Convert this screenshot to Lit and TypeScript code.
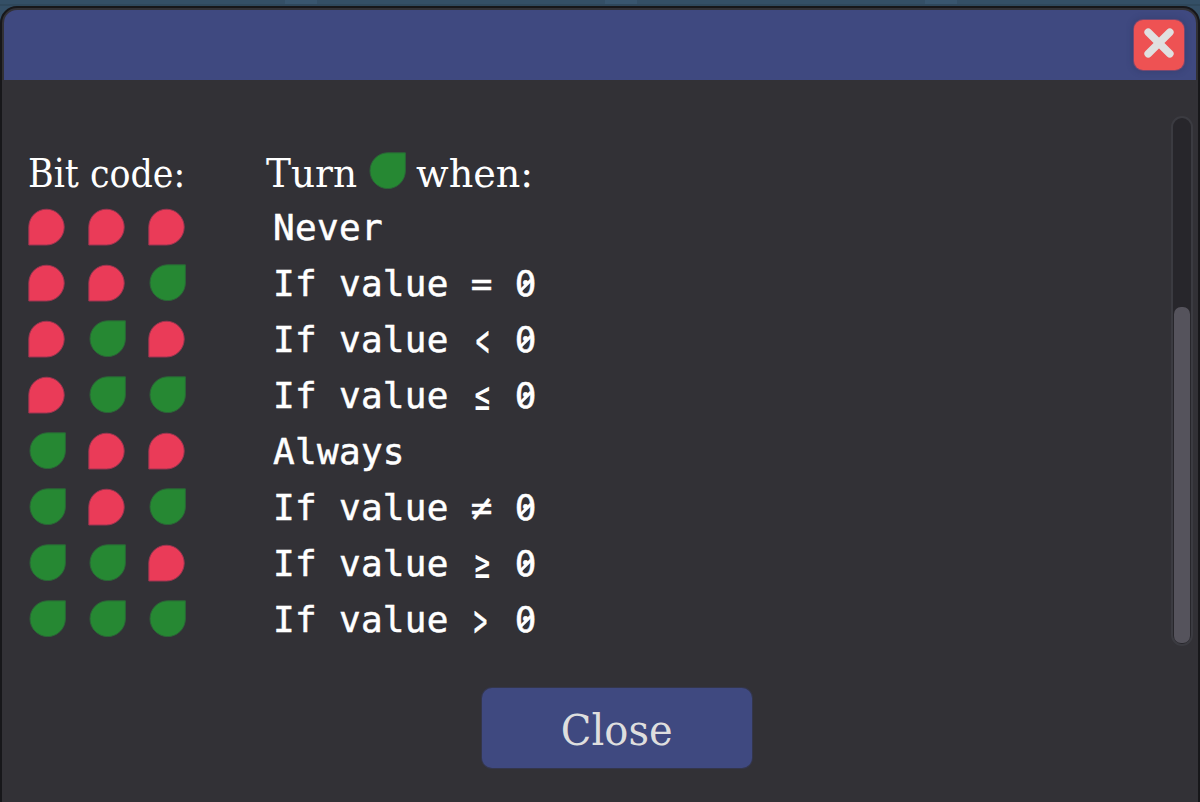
import { LitElement, html, css, svg } from "lit";
import { customElement, property } from "lit/decorators.js";

@customElement("bit-leaf")
class BitLeaf extends LitElement {
  static styles = css`
    :host { display: block; width: 38px; height: 38px; }
    svg { display: block; }
    .off { fill: #ea3b58; stroke: #9c3550; }
    .on { fill: #268833; stroke: #2b6537; }
  `;
  @property({ type: Boolean }) on = false;
  render() {
    return html`<svg width="38" height="38" viewBox="0 0 38 38">
      ${this.on
        ? svg`<path class="on" d="M19.500 0.800H37.400V19A17.700 17.900 0 1 1 19.500 0.800Z"/>`
        : svg`<path class="off" d="M0.800 37V18.500A17.700 17.900 0 1 1 18.500 37Z"/>`}
    </svg>`;
  }
}

@customElement("app-root")
class AppRoot extends LitElement {
  static styles = css`
    :host { display: block; width: 1200px; height: 802px; overflow: hidden; background: linear-gradient(#0000 4px, #2f485c 4px, #2f485c 6px, #0000 6px) 0 0 / 100% 802px no-repeat, repeating-linear-gradient(90deg, #344f66 0 285px, #39566f 285px 317px, #344f66 317px 320px); }
    * { box-sizing: border-box; }
    .page { height: 802px; padding-top: 6px; }
    .window { height: 830px; border: 2px solid #17171a; border-radius: 17px; background: #323136; padding: 2px; }
    .bar { height: 70px; background: #3f4980; border-radius: 13px 13px 0 0; display: flex; justify-content: flex-end; padding: 10px 12px 0 0; }
    .x { width: 50px; height: 50px; border: 0; padding: 0; border-radius: 9px; background: #ee5253; box-shadow: 0 0 0 1px #79486f, 0 0 5px 3px rgba(45, 50, 90, .25); }
    .x svg { display: block; }
    .body { display: flex; justify-content: space-between; height: 566px; padding: 36px 3px 0 24px; }
    .content { padding-top: 27px; }
    .row { display: grid; grid-template-columns: 245px auto; height: 56px; align-items: start; }
    .head { height: 65px; }
    .bits { display: flex; gap: 22px; }
    .slab { font: 40px/60px "DejaVu Serif Condensed", "DejaVu Serif", serif; color: #fff; white-space: nowrap; display: block; transform-origin: 0 50%; }
    .bitcode { width: 158px; transform: scaleX(.97); }
    .turn { display: flex; margin-left: -8px; }
    .t1 { width: 103px; transform: translateX(1px) scaleX(1.04); }
    .t2 { transform: translateX(1px) scaleX(1.06); }
    .turn bit-leaf { margin: 9px 9px 0 0; }
    .mono { font: 36px/42px "DejaVu Sans Mono", monospace; letter-spacing: .3px; color: #fff; white-space: pre; margin-top: -1px; -webkit-text-stroke: .5px #fff; }
    .op { display: inline-block; width: 22px; }
    .lt { transform: translate(.5px, 1px) scale(.62, 1.25); }
    .gt { transform: translate(-1.500px, 1px) scale(.62, 1.25); }
    .le { transform: translate(.5px, -1px) scale(.72, 1.22); -webkit-text-stroke: 0; }
    .zero { position: relative; display: inline-block; width: 22px; }
    .zero::after { content: ""; position: absolute; left: 3.500px; top: 21px; width: 15px; height: 2.500px; background: #fff; transform: rotate(-45deg); }
    .track { width: 22px; height: 530px; border: 2px solid #3b3b41; border-radius: 11px; background: #27262b; padding: 189px 1px 1px; }
    .thumb { height: 336px; border-radius: 7px; background: #55535c; }
    .foot { display: flex; justify-content: center; padding: 42px 0 0 34px; }
    .close { width: 270px; height: 80px; border: 0; padding: 0; border-radius: 10px; background: #3f4980; box-shadow: 0 0 0 1px #34364b; display: flex; justify-content: center; align-items: center; }
    .label { font-size: 42px; color: #dedede; transform: scaleX(1.06); transform-origin: 50% 50%; padding-top: 6px; }
  `;

  private rows = [
    { code: "000", text: "Never" },
    { code: "001", text: "If value ", op: "=" },
    { code: "010", text: "If value ", op: "<", shape: "lt" },
    { code: "011", text: "If value ", op: "≤", shape: "le" },
    { code: "100", text: "Always" },
    { code: "101", text: "If value ", op: "≠" },
    { code: "110", text: "If value ", op: "≥", shape: "le" },
    { code: "111", text: "If value ", op: ">", shape: "gt" },
  ];

  render() {
    return html`<div class="page"><div class="window">
      <div class="bar"><button class="x" aria-label="Close">
        <svg width="50" height="50" viewBox="0 0 50 50"><path d="M14.200 12.200L35.800 33.800M35.800 12.200L14.200 33.800" stroke="#e0e0e0" stroke-width="7.600" stroke-linecap="round"/></svg>
      </button></div>
      <div class="body">
        <div class="content">
          <div class="row head">
            <span class="slab bitcode">Bit code:</span>
            <div class="turn"><span class="slab t1">Turn</span><bit-leaf on></bit-leaf><span class="slab t2">when:</span></div>
          </div>
          ${this.rows.map((r) => html`<div class="row">
            <div class="bits">${[...r.code].map((b) => html`<bit-leaf ?on=${b === "1"}></bit-leaf>`)}</div>
            <div class="mono">${r.text}${r.op ? html`<span class="op ${r.shape ?? ""}">${r.op}</span> <span class="zero">0</span>` : ""}</div>
          </div>`)}
        </div>
        <div class="track"><div class="thumb"></div></div>
      </div>
      <div class="foot"><button class="close"><span class="slab label">Close</span></button></div>
    </div></div>`;
  }
}
